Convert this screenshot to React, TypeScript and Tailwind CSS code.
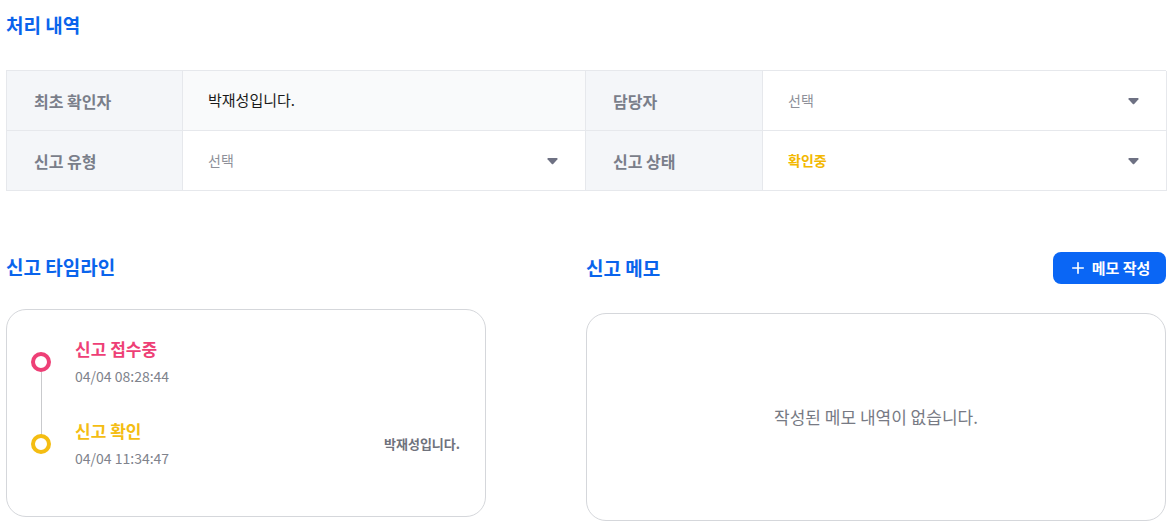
import { Plus } from "lucide-react";

const font = { fontFamily: '"Noto Sans CJK KR", "Noto Sans", sans-serif' };

function Caret() {
  return (
    <svg width="11" height="8" viewBox="0 0 11 8" className="shrink-0">
      <path d="M1.2 1h8.6c.7 0 1.1.8.7 1.3L6.2 7c-.4.4-1 .4-1.4 0L.5 2.3C.1 1.8.5 1 1.2 1z" fill="#6e7183" />
    </svg>
  );
}

function Label({ children }: { children: React.ReactNode }) {
  return (
    <div className="flex h-[60px] items-center border-r border-b border-[#e6e8ec] bg-[#f4f6f9] pl-[27px] text-[16px] font-bold text-[#7a7e8a]">
      {children}
    </div>
  );
}

function SelectCell({ value, tone }: { value: string; tone?: "status" }) {
  return (
    <div className="flex h-[60px] items-center justify-between border-r border-b border-[#e6e8ec] bg-white pr-[27px] pl-[25px]">
      <span className={tone === "status" ? "text-[14px] font-bold text-[#f3b800]" : "text-[14px] text-[#8d9099]"}>{value}</span>
      <Caret />
    </div>
  );
}

function TimelineItem({ title, time, color, by }: { title: string; time: string; color: string; by?: string }) {
  return (
    <div className="relative flex items-center">
      <div className="z-10 h-[20px] w-[20px] shrink-0 rounded-full border-[4px] bg-white" style={{ borderColor: color }} />
      <div className="ml-[24px] flex flex-col">
        <span className="text-[17px] font-bold leading-[22px]" style={{ color }}>
          {title}
        </span>
        <span className="mt-[7px] text-[14px] leading-[18px] text-[#80838c]">{time}</span>
      </div>
      {by ? <span className="ml-auto text-[13px] font-bold text-[#6f727c]">{by}</span> : null}
    </div>
  );
}

export default function App(): React.JSX.Element {
  return (
    <div className="h-[531px] w-[1175px] overflow-hidden bg-white pr-[9px] pl-[6px]" style={font}>
      <h2 className="pt-[12px] text-[19px] leading-[26px] font-bold text-[#0a64ec]">처리 내역</h2>

      <div className="mt-[32px] grid grid-cols-[176px_403px_177px_404px] border-t border-l border-[#e6e8ec]">
        <Label>최초 확인자</Label>
        <div className="flex h-[60px] items-center border-r border-b border-[#e6e8ec] bg-[#f9fafb] pl-[25px] text-[15px] text-[#1a1a1a]">
          박재성입니다.
        </div>
        <Label>담당자</Label>
        <SelectCell value="선택" />
        <Label>신고 유형</Label>
        <SelectCell value="선택" />
        <Label>신고 상태</Label>
        <SelectCell value="확인중" tone="status" />
      </div>

      <div className="mt-[60px] flex gap-[100px]">
        <div className="flex w-[480px] flex-col">
          <div className="flex h-[32px] items-center">
            <h2 className="text-[19px] font-bold text-[#0a64ec]">신고 타임라인</h2>
          </div>
          <div className="relative mt-[26px] h-[208px] rounded-[20px] border border-[#d5d7db] pt-[28px] pr-[25px] pl-[24px]">
            <div className="absolute top-[62px] left-[34px] h-[74px] w-px bg-[#c9cacd]" />
            <div className="flex flex-col gap-[35px]">
              <TimelineItem title="신고 접수중" time="04/04 08:28:44" color="#ee3f76" />
              <TimelineItem title="신고 확인" time="04/04 11:34:47" color="#f4bd12" by="박재성입니다." />
            </div>
          </div>
        </div>

        <div className="flex w-[580px] flex-col">
          <div className="flex h-[32px] items-center justify-between pt-[2px]">
            <h2 className="text-[19px] font-bold text-[#0a64ec]">신고 메모</h2>
            <button className="flex h-[32px] w-[113px] items-center justify-center gap-[5px] rounded-[8px] bg-[#0a66f5] text-[15px] font-bold text-white">
              <Plus size={18} strokeWidth={2.2} />
              메모 작성
            </button>
          </div>
          <div className="mt-[30px] flex h-[208px] items-center justify-center rounded-[20px] border border-[#d5d7db]">
            <span className="text-[17px] text-[#777a84]">작성된 메모 내역이 없습니다.</span>
          </div>
        </div>
      </div>
    </div>
  );
}
